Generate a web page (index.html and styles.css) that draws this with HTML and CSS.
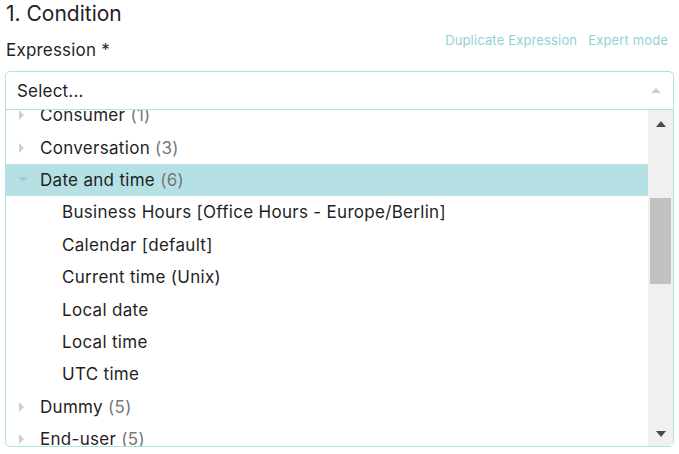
FILE: index.html
```html
<!DOCTYPE html>
<html lang="en">
<head>
    <meta charset="UTF-8">
    <title>Condition</title>
    <link rel="stylesheet" href="styles.css">
</head>
<body>
    <div class="panel">
        <h2 class="title">1. Condition</h2>

        <div class="field-head">
            <label class="label">Expression *</label>
            <div class="links">
                <a class="link">Duplicate Expression</a>
                <a class="link">Expert mode</a>
            </div>
        </div>

        <div class="select">
            <div class="select-control">
                <span class="placeholder">Select...</span>
                <span class="caret-up"></span>
            </div>
            <div class="menu">
                <div class="menu-list">
                    <div class="menu-inner">
                        <div class="row group"><span class="arrow"></span>Consumer <span class="count">(1)</span></div>
                        <div class="row group"><span class="arrow"></span>Conversation <span class="count">(3)</span></div>
                        <div class="row group open"><span class="arrow down"></span>Date and time <span class="count">(6)</span></div>
                        <div class="row child">Business Hours [Office Hours - Europe/Berlin]</div>
                        <div class="row child">Calendar [default]</div>
                        <div class="row child">Current time (Unix)</div>
                        <div class="row child">Local date</div>
                        <div class="row child">Local time</div>
                        <div class="row child">UTC time</div>
                        <div class="row group"><span class="arrow"></span>Dummy <span class="count">(5)</span></div>
                        <div class="row group"><span class="arrow"></span>End-user <span class="count">(5)</span></div>
                    </div>
                </div>
                <!-- fake scrollbar -->
                <div class="scrollbar">
                    <span class="sb-up"></span>
                    <div class="sb-track">
                        <div class="sb-thumb"></div>
                    </div>
                    <span class="sb-down"></span>
                </div>
            </div>
        </div>
    </div>
</body>
</html>
```

FILE: styles.css
```css
body {
    margin: 0;
    font-family: Inter, "Open Sans", sans-serif;
    color: #1f1f1f;
    background: #fff;
}
.panel {
    padding: 0 5px 0 5px;
    width: 669px;
}
.title {
    font-size: 21px;
    font-weight: 400;
    margin: 0;
    padding: 1px 0 0 1px;
    line-height: 26px;
}
.field-head {
    display: flex;
    justify-content: space-between;
    align-items: flex-start;
    margin-top: 10px;
    height: 34px;
}
.label {
    font-size: 17px;
    letter-spacing: 0.2px;
    padding-left: 1px;
    line-height: 26px;
    margin-top: 0;
}
.links {
    display: flex;
    gap: 11px;
    padding-right: 6px;
    margin-top: -5px;
}
.link {
    font-size: 13px;
    letter-spacing: 0.15px;
    color: #8fd2d7;
    line-height: 16px;
}
.select {
    border: 1px solid #b3e0e3;
    border-radius: 5px;
}
.select-control {
    display: flex;
    align-items: center;
    justify-content: space-between;
    height: 37px;
    padding: 0 12px 0 11px;
    border-bottom: 1px solid #b3e0e3;
}
.placeholder {
    font-size: 17px;
    letter-spacing: 0.2px;
}
.caret-up {
    width: 0;
    height: 0;
    border-left: 5px solid transparent;
    border-right: 5px solid transparent;
    border-bottom: 5px solid #cfcfcf;
}
.menu {
    display: flex;
    height: 336px;
}
.menu-list {
    flex: 1;
    overflow: hidden;
}
.menu-inner {
    margin-top: -11px;
}
.row {
    display: flex;
    align-items: center;
    height: 32.4px;
    font-size: 17px;
    letter-spacing: 0.3px;
    white-space: pre;
}
.group {
    padding-left: 12px;
}
.child {
    padding-left: 56px;
}
.open {
    background: #b5e1e4;
}
.arrow {
    width: 0;
    height: 0;
    border-top: 5px solid transparent;
    border-bottom: 5px solid transparent;
    border-left: 5px solid #cfcfcf;
    margin: 0 16px 0 1px;
}
.arrow.down {
    border-left: 5px solid transparent;
    border-right: 5px solid transparent;
    border-top: 5px solid #9fd0d3;
    border-bottom: 0;
    margin: 0 12px 0 0;
}
.count {
    color: #777;
}
.scrollbar {
    width: 25px;
    background: #f0f0f0;
    display: flex;
    flex-direction: column;
    align-items: center;
}
.sb-up, .sb-down {
    width: 0;
    height: 0;
    border-left: 5px solid transparent;
    border-right: 5px solid transparent;
}
.sb-up {
    border-bottom: 6px solid #4a4a4a;
    margin: 11px 0 10px;
}
.sb-down {
    border-top: 6px solid #4a4a4a;
    margin: 10px 0 9px;
}
.sb-track {
    flex: 1;
    width: 100%;
    padding: 61px 2px 0;
    box-sizing: border-box;
}
.sb-thumb {
    height: 86px;
    background: #c1c1c1;
}
```
